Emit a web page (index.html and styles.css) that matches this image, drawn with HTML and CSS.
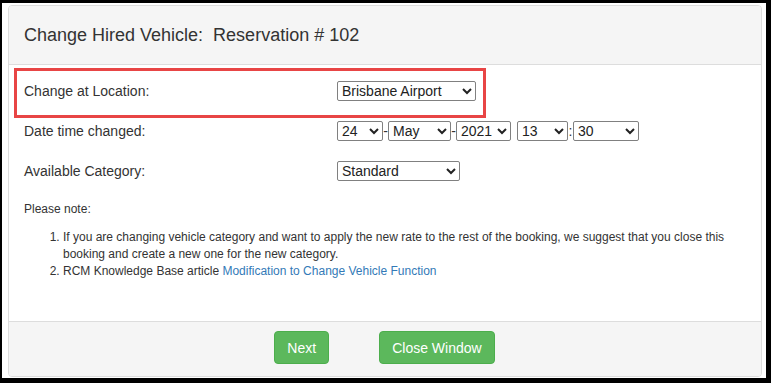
FILE: index.html
```html
<!DOCTYPE html>
<html lang="en">
  <head>
    <meta charset="UTF-8" />
    <title>Change Hired Vehicle</title>
    <link rel="stylesheet" href="styles.css">
  </head>
  <body>
    <div class="frame">
      <div class="panel">
        <div class="panelHeading">
          <h3>Change Hired Vehicle:&nbsp; Reservation # 102</h3>
        </div>
        <div class="panelBody">
          <div class="formGrid">
            <label>Change at Location:</label>
            <div class="controls">
              <select class="selLocation">
                <option>Brisbane Airport</option>
              </select>
            </div>
            <label>Date time changed:</label>
            <div class="controls">
              <select class="selDay"><option>24</option></select>
              <span class="sep">-</span>
              <select class="selMonth"><option>May</option></select>
              <span class="sep">-</span>
              <select class="selYear"><option>2021</option></select>
              <span class="gap"></span>
              <select class="selHour"><option>13</option></select>
              <span class="sep">:</span>
              <select class="selMin"><option>30</option></select>
            </div>
            <label>Available Category:</label>
            <div class="controls">
              <select class="selCategory">
                <option>Standard</option>
              </select>
            </div>
          </div>
          <p class="note">Please note:</p>
          <ol class="noteList">
            <li>If you are changing vehicle category and want to apply the new rate to the rest of the booking, we suggest that you close this booking and create a new one for the new category.</li>
            <li>RCM Knowledge Base article <a href="#">Modification to Change Vehicle Function</a></li>
          </ol>
        </div>
        <div class="panelFooter">
          <button class="btn">Next</button>
          <button class="btn">Close Window</button>
        </div>
        <div class="highlight"></div>
      </div>
    </div>
  </body>
</html>
```

FILE: styles.css
```css
html, body {
  margin: 0;
  background-color: #000000;
}
body {
  font-family: "Liberation Sans", Arial, sans-serif;
  color: #333333;
}
.frame {
  margin: 3px 5px 5px 2px;
  height: 375px;
  box-sizing: border-box;
  padding: 2px 4px 1px 6px;
  background-color: #ffffff;
}
.panel {
  position: relative;
  height: 372px;
  box-sizing: border-box;
  border: 1px solid #dddddd;
  border-radius: 4px;
  display: flex;
  flex-direction: column;
  background-color: #ffffff;
}
.panelHeading {
  height: 59px;
  box-sizing: border-box;
  padding: 0 15px;
  display: flex;
  align-items: center;
  background-color: #f5f5f5;
  border-bottom: 1px solid #dddddd;
  border-radius: 3px 3px 0 0;
}
.panelHeading > h3 {
  margin: 0;
  font-size: 18px;
  font-weight: normal;
  color: #333333;
}
.panelBody {
  flex-grow: 1;
  padding: 6px 15px 0 15px;
}
.formGrid {
  display: grid;
  grid-template-columns: 313px auto;
  grid-template-rows: 39px 41px 40px;
  align-items: center;
  font-size: 14px;
}
.controls {
  display: flex;
  align-items: center;
}
select {
  height: 20px;
  font-family: "Liberation Sans", Arial, sans-serif;
  font-size: 14px;
  color: #222222;
  border: 1px solid #808080;
  border-radius: 2px;
  background-color: #ffffff;
  margin: 0;
}
.selLocation { width: 139px; }
.selDay { width: 46px; }
.selMonth { width: 63px; }
.selYear { width: 55px; }
.selHour { width: 51px; }
.selMin { width: 66px; }
.selCategory { width: 123px; }
.sep {
  width: 5px;
  text-align: center;
  font-size: 14px;
}
.gap {
  width: 6px;
}
.note {
  margin: 10px 0 11px 0;
  font-size: 12px;
  line-height: 17px;
}
.noteList {
  margin: 0;
  padding-left: 39px;
  font-size: 12px;
  line-height: 17px;
}
.noteList a {
  color: #337ab7;
  text-decoration: none;
}
.panelFooter {
  height: 55px;
  box-sizing: border-box;
  padding: 9px 15px 10px 14px;
  display: flex;
  justify-content: center;
  align-items: flex-start;
  gap: 50px;
  background-color: #f5f5f5;
  border-top: 1px solid #dddddd;
  border-radius: 0 0 3px 3px;
}
.btn {
  height: 33px;
  padding: 5px 12px;
  font-family: "Liberation Sans", Arial, sans-serif;
  font-size: 14px;
  line-height: 20px;
  color: #ffffff;
  background-color: #5cb85c;
  border: 1px solid #4cae4c;
  border-radius: 4px;
}
.highlight {
  position: absolute;
  left: 5px;
  top: 62px;
  width: 472px;
  height: 50px;
  box-sizing: border-box;
  border: 3px solid #e84545;
}
```
